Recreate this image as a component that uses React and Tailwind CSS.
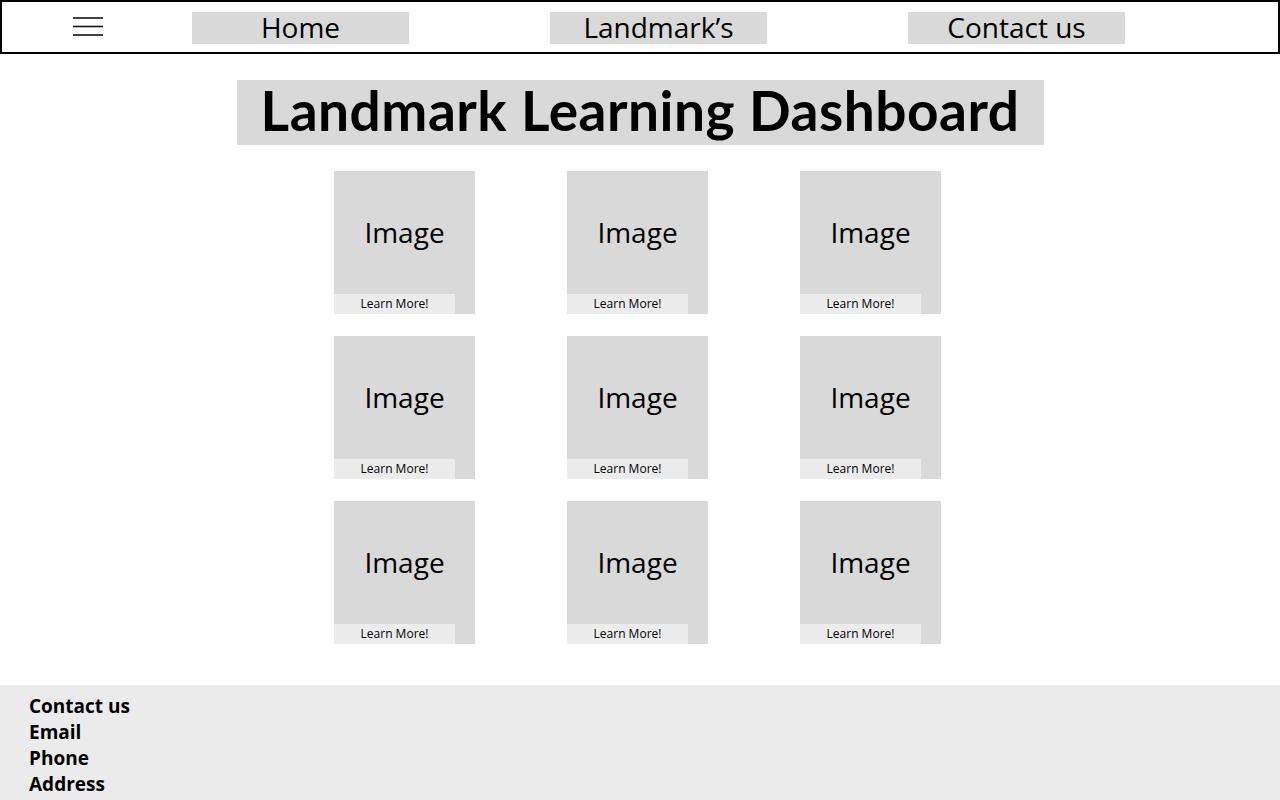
import React from "react";

const navItems = ["Home", "Landmark’s", "Contact us"];

// Hamburger icon
const MenuIcon = () => (
  <svg width="30" height="20" viewBox="0 0 30 20" className="block">
    <line x1="0" y1="1" x2="30" y2="1" stroke="#111" strokeWidth="1.6" />
    <line x1="0" y1="9.5" x2="30" y2="9.5" stroke="#111" strokeWidth="1.6" />
    <line x1="0" y1="18" x2="30" y2="18" stroke="#111" strokeWidth="1.6" />
  </svg>
);

const Card = () => (
  <div className="relative w-[141px] h-[143px] bg-[#d9d9d9]">
    <p className="pt-[44px] text-center text-[28px] leading-[34px] text-black">Image</p>
    <button className="absolute left-0 bottom-0 w-[121px] h-[20px] bg-[#ececec] text-[12px] leading-[20px] text-black text-center">
      Learn More!
    </button>
  </div>
);

export default function App() {
  return (
    <div className="min-h-[800px] bg-white flex flex-col font-['Open_Sans',sans-serif]">
      {/* Top nav */}
      <nav className="h-[54px] border-2 border-black flex items-center pl-[71px]">
        <MenuIcon />
        <div className="flex items-center ml-[89px] gap-[141px] mt-[2px]">
          {navItems.map((item) => (
            <a
              key={item}
              href="#"
              className="w-[217px] h-[32px] bg-[#d9d9d9] text-center text-[28px] leading-[30px] text-black"
            >
              {item}
            </a>
          ))}
        </div>
      </nav>

      {/* Title */}
      <div className="mt-[26px] mx-auto w-[807px] h-[65px] bg-[#d9d9d9] flex items-center justify-center">
        <h1 className="mb-[6px] whitespace-nowrap font-['Lato',sans-serif] font-bold text-[55px] leading-[60px] tracking-[0.5px] text-black">
          Landmark Learning Dashboard
        </h1>
      </div>

      {/* Cards */}
      <div className="mt-[26px] ml-[334px] grid grid-cols-[141px_141px_141px] gap-x-[92px] gap-y-[22px]">
        {Array.from({ length: 9 }).map((_, i) => (
          <Card key={i} />
        ))}
      </div>

      {/* Footer */}
      <footer className="mt-auto h-[115px] bg-[#ebebeb] pl-[29px] pt-[8px]">
        {["Contact us", "Email", "Phone", "Address"].map((t) => (
          <p key={t} className="font-bold text-[19px] leading-[26px] text-black">
            {t}
          </p>
        ))}
      </footer>
    </div>
  );
}
